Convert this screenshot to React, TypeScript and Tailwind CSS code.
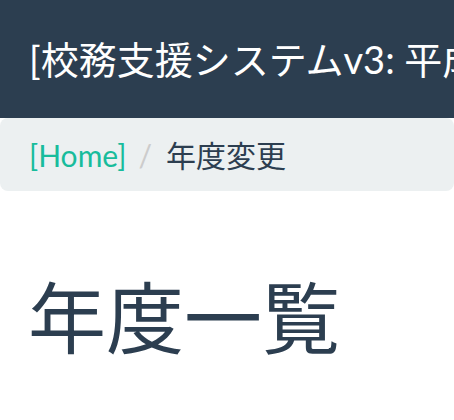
const FONT = "font-['Lato','Noto_Sans_CJK_JP',sans-serif]";

export default function App() {
  return (
    <div className={`${FONT} w-[454px] h-[420px] overflow-hidden bg-white text-[#2c3e50]`}>
      <nav className="h-[118px] bg-[#2c3e50] flex items-center px-[29px] overflow-hidden">
        <a className="text-[38px] leading-none text-white whitespace-nowrap">
          [校務支援システムv3: 平成30年度]
        </a>
      </nav>

      <ol className="h-[73px] bg-[#ecf0f1] rounded-lg flex items-center px-[29px] text-[30px] leading-none whitespace-nowrap">
        <li>
          <a className="text-[#18bc9c]">[Home]</a>
        </li>
        <li className="text-[#cccccc] ml-[12px] mr-[14px]">/</li>
        <li className="text-[#2c3e50]">年度変更</li>
      </ol>

      <h1 className="mt-[84px] px-[28px] text-[78px] leading-[86px] font-normal">年度一覧</h1>
    </div>
  );
}
